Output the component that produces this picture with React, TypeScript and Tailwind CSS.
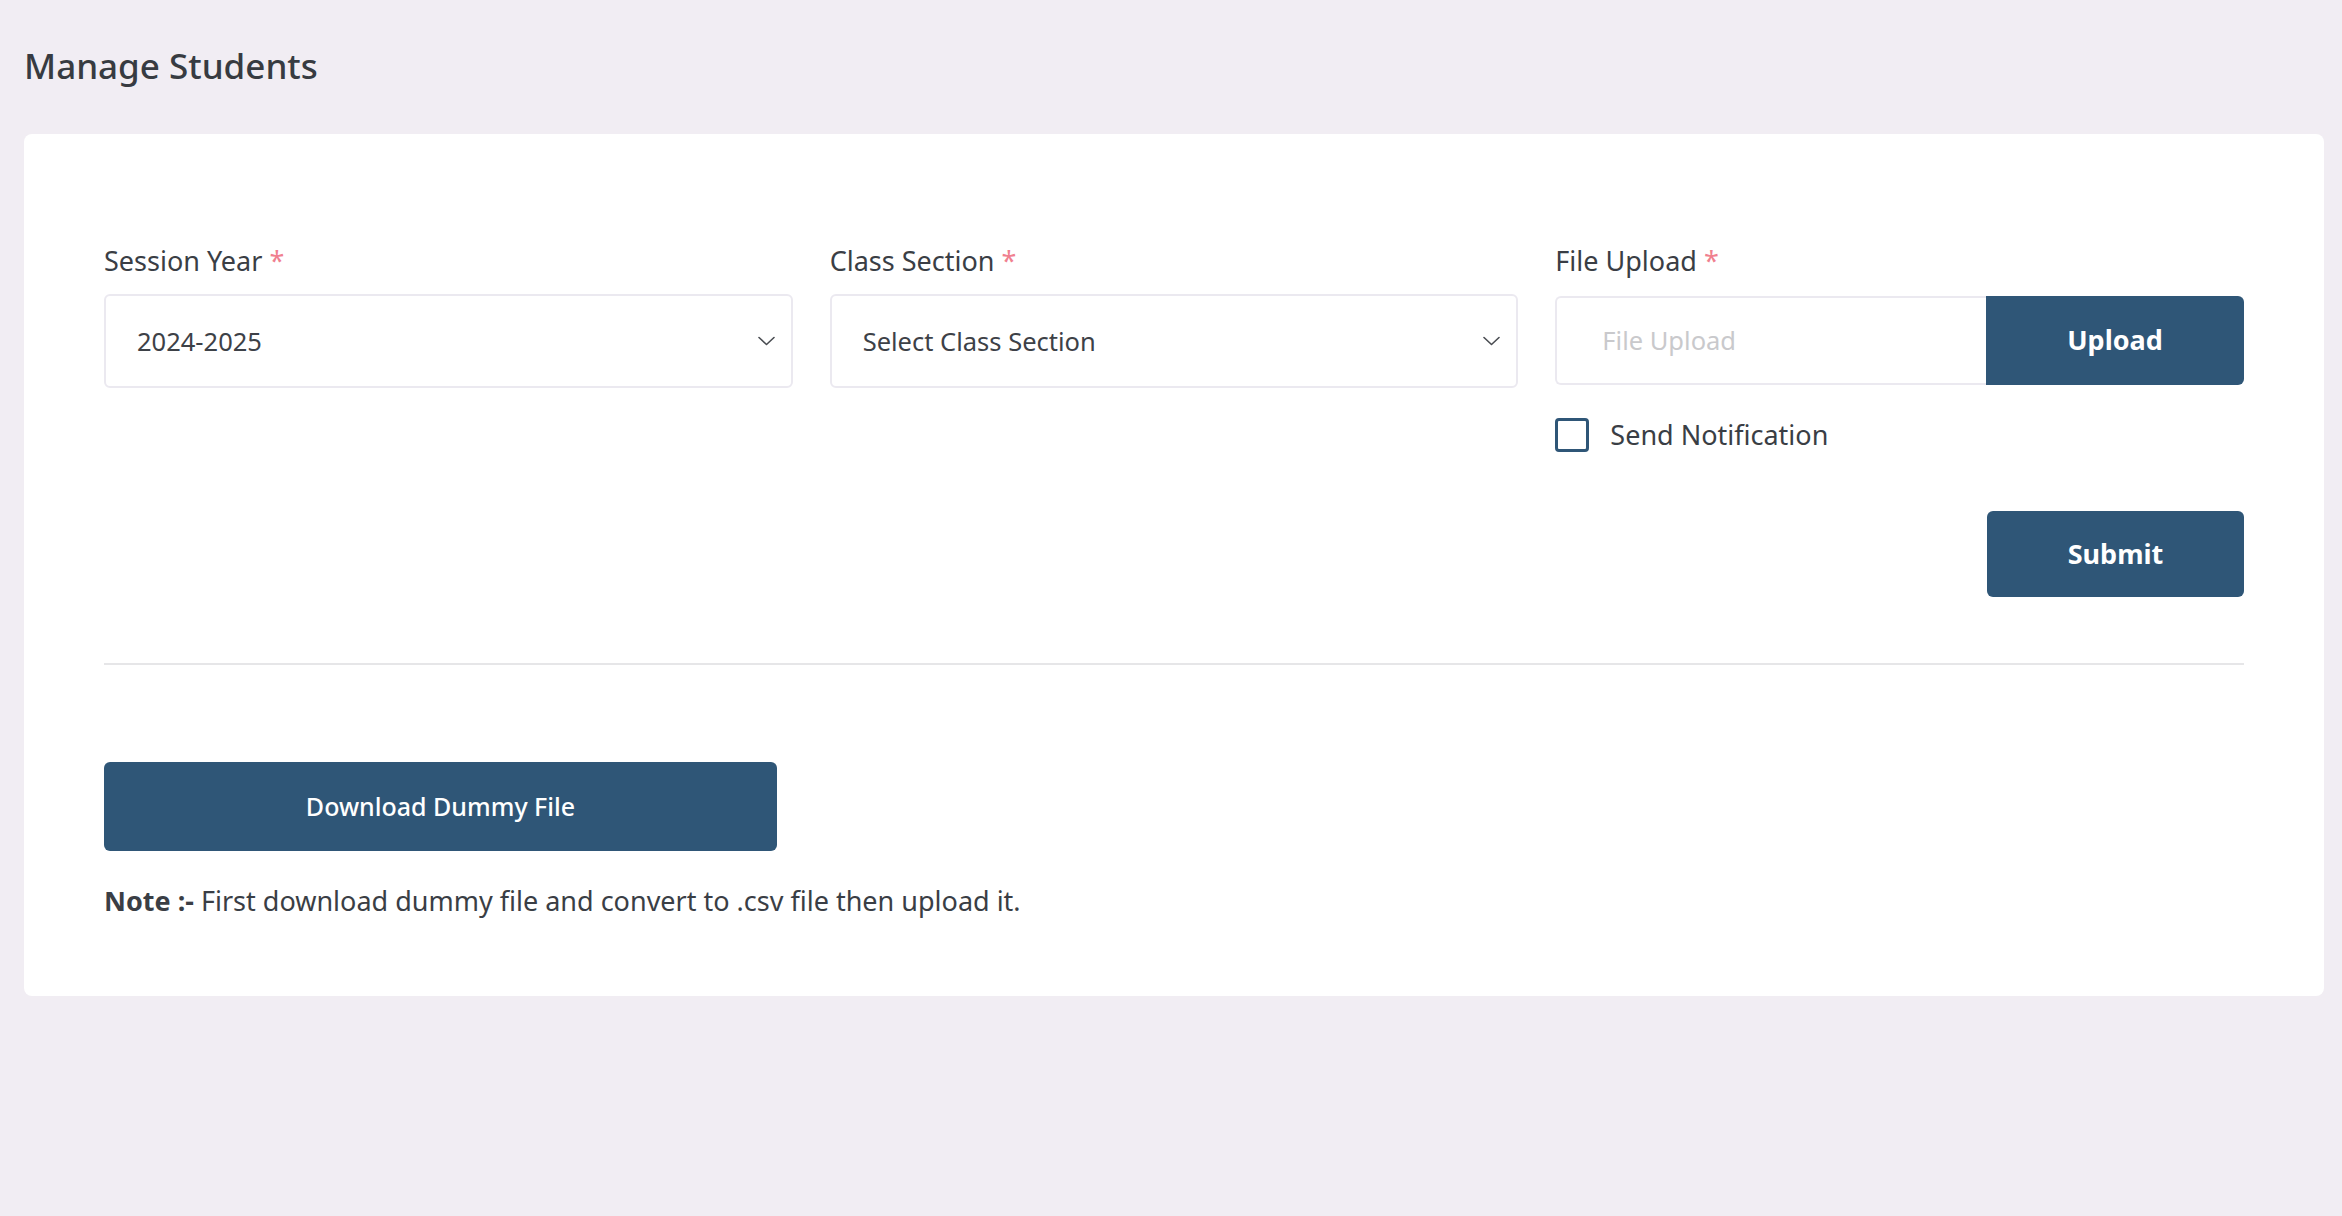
import React from "react";

const Chevron = () => (
  <svg width="17" height="10" viewBox="0 0 17 10" fill="none" className="shrink-0">
    <path d="M1 1.5l7.5 7 7.5-7" stroke="#4a4d52" strokeWidth="1.6" strokeLinecap="round" strokeLinejoin="round" />
  </svg>
);

const Label = ({ children }: { children: React.ReactNode }) => (
  <div className="h-[30px] leading-[30px] text-[27px] text-[#3a3e45]">
    {children} <span className="text-[#f0808f]">*</span>
  </div>
);

export default function App() {
  return (
    <div
      className="min-h-screen bg-[#f1edf3] pl-[24px] pr-[18px] pt-[46px] pb-[40px] text-[#3a3e45]"
      style={{ fontFamily: '"Noto Sans", "Open Sans", sans-serif' }}
    >
      <h1 className="h-[40px] leading-[40px] text-[35px] font-medium text-[#373b41]">Manage Students</h1>
      <div className="mt-[48px] rounded-[8px] bg-white px-[80px] pt-[112px] pb-[80px]">
        <div className="grid grid-cols-3 gap-x-[37px]">
          <div>
            <Label>Session Year</Label>
            <div className="mt-[18px] flex h-[94px] items-center justify-between rounded-[6px] border-2 border-[#ebe9f0] pl-[31px] pr-[16px] text-[25.5px] text-[#3d4147]">
              <span>2024-2025</span>
              <Chevron />
            </div>
          </div>
          <div>
            <Label>Class Section</Label>
            <div className="mt-[18px] flex h-[94px] items-center justify-between rounded-[6px] border-2 border-[#ebe9f0] pl-[31px] pr-[16px] text-[25.5px] text-[#3d4147]">
              <span>Select Class Section</span>
              <Chevron />
            </div>
          </div>
          <div className="flex flex-col">
            <Label>File Upload</Label>
            <div className="mt-[20px] flex h-[89px]">
              <div className="flex flex-1 items-center rounded-l-[6px] border-2 border-r-0 border-[#ebe9f0] pl-[45px] text-[25.5px] text-[#c9c9cc]">
                File Upload
              </div>
              <button className="w-[258px] rounded-r-[6px] bg-[#2f5677] text-[27px] font-bold text-white">Upload</button>
            </div>
            <label className="mt-[33px] flex h-[34px] items-center gap-[21px]">
              <span className="h-[34px] w-[34px] rounded-[4px] border-[3px] border-[#2f5677] bg-white"></span>
              <span className="text-[27px] text-[#3a3e45]">Send Notification</span>
            </label>
            <div className="mt-[59px] flex justify-end">
              <button className="h-[86px] w-[257px] rounded-[6px] bg-[#2f5677] text-[27px] font-bold text-white">Submit</button>
            </div>
          </div>
        </div>
        <div className="mt-[66px] h-[2px] bg-[#e6e6e8]"></div>
        <button className="mt-[97px] h-[89px] w-[673px] rounded-[6px] bg-[#2f5677] text-[25px] font-medium text-white">
          Download Dummy File
        </button>
        <p className="mt-[35px] h-[30px] leading-[30px] text-[27px] text-[#3a3e45]">
          <span className="font-bold">Note :-</span> First download dummy file and convert to .csv file then upload it.
        </p>
      </div>
    </div>
  );
}
